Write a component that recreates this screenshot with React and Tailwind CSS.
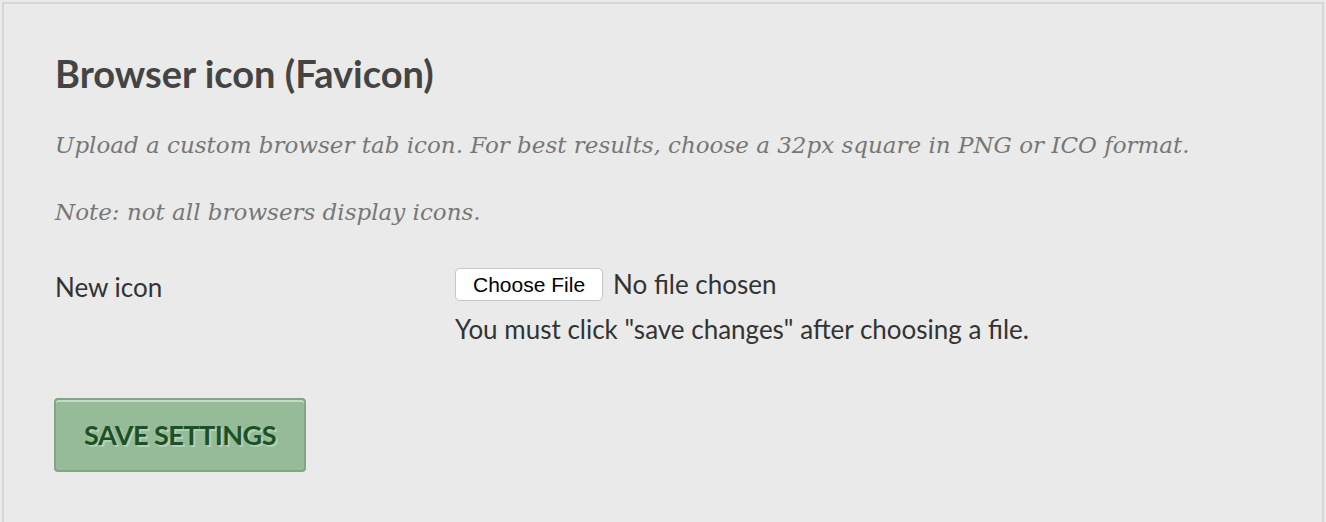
import React from 'react';

const App = () => {
  return (
    <div className="min-h-[522px] bg-[#eaeaea] pt-[2px] px-[2px]">
      <div className="border-2 border-b-0 border-[#d6d6d6] bg-[#eaeaea] px-[51px] pt-[45px] pb-[48px] min-h-[520px]">
        <h2 className="font-['Lato',sans-serif] font-bold text-[38px] leading-[48px] text-[#444]">
          Browser icon (Favicon)
        </h2>
        <p className="mt-[33px] font-['DejaVu_Serif',serif] italic text-[23px] leading-[30px] text-[#777]">
          Upload a custom browser tab icon. For best results, choose a 32px square in PNG or ICO format.
        </p>
        <p className="mt-[37px] font-['DejaVu_Serif',serif] italic text-[23px] leading-[30px] text-[#777]">
          Note: not all browsers display icons.
        </p>

        <div className="mt-[41px] flex font-['Lato',sans-serif] text-[26px] text-[#333]">
          <div className="w-[400px] pt-[3px] leading-[33px]">New icon</div>
          <div className="flex flex-col">
            <div className="flex items-center gap-[10px]">
              <span className="h-[33px] px-[17px] flex items-center bg-white border border-[#c6c6c6] rounded-[5px] font-['Liberation_Sans',sans-serif] text-[21px] text-black">
                Choose File
              </span>
              <span className="leading-[33px]">No file chosen</span>
            </div>
            <div className="mt-[13px] leading-[30px]">You must click "save changes" after choosing a file.</div>
          </div>
        </div>

        <button className="mt-[54px] -ml-px w-[252px] h-[74px] rounded-[4px] border-2 border-[#80a684] bg-[#96bb98] shadow-[inset_0_2px_0_#c3dac4] font-['Lato',sans-serif] font-bold text-[27px] tracking-[-0.5px] text-[#1b5225] [text-shadow:2px_2px_0_#b4cfb5]">
          SAVE SETTINGS
        </button>
      </div>
    </div>
  );
};

export default App;
